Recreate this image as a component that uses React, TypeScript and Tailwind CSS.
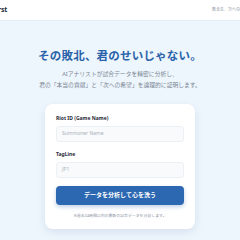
import React from "react";

const App: React.FC = () => {
  return (
    <div
      className="min-h-screen bg-[#eef6fd] overflow-hidden"
      style={{ fontFamily: '"Noto Sans", "Noto Sans CJK JP", sans-serif' }}
    >
      {/* Header */}
      <header className="h-[21px] bg-white border-b border-[#e3edf7] flex justify-center overflow-hidden">
        <div className="w-[296px] shrink-0 flex items-center justify-between px-[2px]">
          <span className="text-[7px] font-bold text-[#1f2d3d] tracking-tight">Rift Worst</span>
          <span className="text-[4px] text-[#8a94a3] w-[54px] whitespace-nowrap">敗北を、次への希望に。</span>
        </div>
      </header>

      {/* Hero */}
      <div className="flex flex-col items-center pt-[29px]">
        <h1 className="text-[11.5px] font-bold text-[#2a63a9] leading-none tracking-[0.2px]">
          その敗北、君のせいじゃない。
        </h1>
        <p className="mt-[7px] text-[5.8px] text-[#7b8694] leading-[11px] text-center">
          AIアナリストが試合データを精密に分析し、
          <br />
          君の「本当の貢献」と「次への希望」を論理的に証明します。
        </p>

        {/* Card */}
        <div className="mt-[13px] w-[150px] bg-white rounded-[8px] shadow-[0_3px_10px_rgba(30,70,120,0.12)] px-[11px] pt-[12px] pb-[12px]">
          <label className="block text-[5px] font-bold text-[#1f2937] leading-none">Riot ID (Game Name)</label>
          <div className="mt-[5px] h-[16px] rounded-[3px] bg-[#f9fafb] border border-[#eef1f4] flex items-center px-[5px]">
            <span className="text-[5px] text-[#a9b1bc]">Summoner Name</span>
          </div>

          <label className="block mt-[10px] text-[5px] font-bold text-[#1f2937] leading-none">TagLine</label>
          <div className="mt-[5px] h-[16px] rounded-[3px] bg-[#f9fafb] border border-[#eef1f4] flex items-center px-[5px]">
            <span className="text-[5px] text-[#a9b1bc]">JP1</span>
          </div>

          <button className="mt-[8px] w-full h-[19px] rounded-[4px] bg-[#2c68b1] text-white text-[6px] font-bold flex items-center justify-center shadow-[0_2px_4px_rgba(44,104,177,0.3)]">
            データを分析して心を洗う
          </button>

          <p className="mt-[9px] text-[3.9px] text-[#8a94a3] text-center leading-none">
            ※過去24時間以内の最新の試合データを分析します。
          </p>
        </div>
      </div>
    </div>
  );
};

export default App;
